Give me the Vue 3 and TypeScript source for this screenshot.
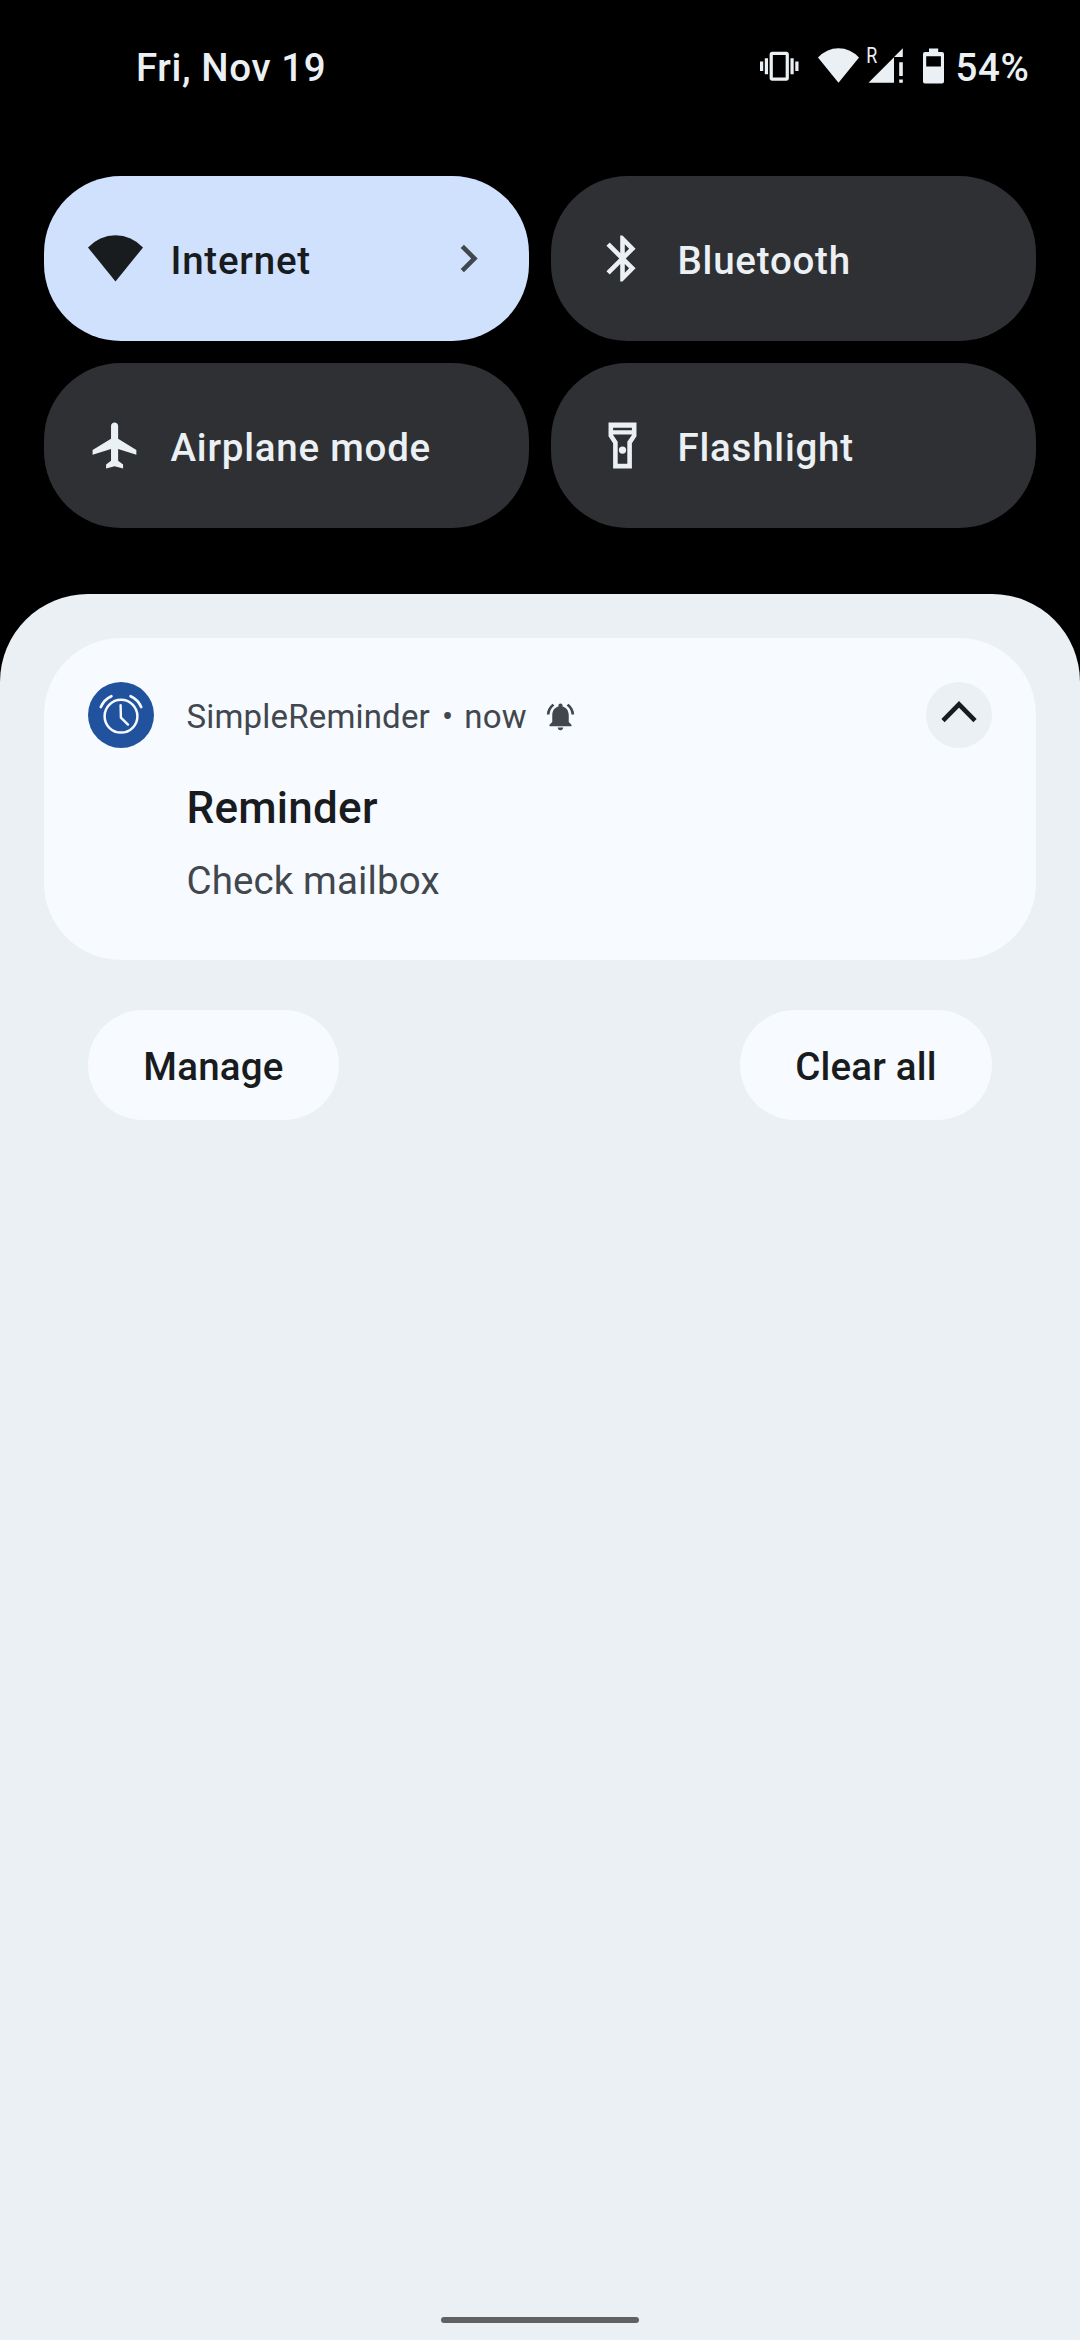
<script setup lang="ts">
interface Tile {
  label: string
  icon: string
  active?: boolean
}

const tiles: Tile[] = [
  { label: 'Internet', active: true, icon: 'M0 7.2A16.1 16.1 0 0 1 24 7.2L12 22z' },
  {
    label: 'Bluetooth',
    icon: 'M17.71 7.71L12 2h-1v7.59L6.41 5 5 6.41 10.59 12 5 17.59 6.41 19 11 14.41V22h1l5.71-5.71-4.3-4.29 4.3-4.29zM13 5.83l1.88 1.88L13 9.59V5.83zm1.88 10.46L13 18.17v-3.76l1.88 1.88z',
  },
  {
    label: 'Airplane mode',
    icon: 'M21.1 16v-2l-7.95-5V3.5c0-.83-.72-1.5-1.55-1.5s-1.55.67-1.55 1.5V9L2 14v2l8.05-2.5V18.7L7.9 20.3V22l3.7-1 3.7 1v-1.7l-2.15-1.6v-5.2l7.95 2.5z',
  },
  {
    label: 'Flashlight',
    icon: 'M18.1 2H5.9v6l2 3v11h8.2V11l2-3V2zm-2 2.3v1H7.9v-1h8.2zm-2 6.1V20H9.9v-9.6l-2-3v-.2h8.2v.2l-2 3zM12 12.4a1.6 1.6 0 1 0 0 3.2 1.6 1.6 0 1 0 0-3.2z',
  },
]
</script>

<template>
  <div class="screen">
    <header class="status">
      <span class="date">Fri, Nov 19</span>
      <div class="indicators">
        <svg class="vibrate" viewBox="0 0 24 24">
          <path d="M0 15h2V9H0v6zm3 2h2V7H3v10zm19-8v6h2V9h-2zm-3 8h2V7h-2v10zM16.5 3h-9C6.67 3 6 3.67 6 4.5v15c0 .83.67 1.5 1.5 1.5h9c.83 0 1.5-.67 1.5-1.5v-15c0-.83-.67-1.5-1.5-1.5zM16 19H8V5h8v14z" />
        </svg>
        <svg class="wifi" viewBox="0 0 41 36">
          <path d="M0 9.6A27.3 27.3 0 0 1 41 9.6L20.5 34.7z" />
        </svg>
        <svg class="signal" viewBox="-4 -6 40 48">
          <text x="-0.8" y="15.2" textLength="11" lengthAdjust="spacingAndGlyphs">R</text>
          <path d="M1.5 34.7L27 9.2V34.7zM27 8.9L35.8 0.3V8.9zM32.2 14.3h3.6V28h-3.6zM32.2 31.6h3.6v3.1h-3.6z" />
        </svg>
        <svg class="battery" viewBox="0 0 21 36">
          <path fill-rule="evenodd" d="M6 0.4h9.2V4H19a2 2 0 0 1 2 2v27.6a2 2 0 0 1-2 2H2a2 2 0 0 1-2-2V6a2 2 0 0 1 2-2h4zM3.2 8.2v10.3h14.7V8.2z" />
        </svg>
        <span class="percent">54%</span>
      </div>
    </header>

    <section class="tiles">
      <button v-for="tile in tiles" :key="tile.label" class="tile" :class="{ active: tile.active }">
        <svg class="tile-icon" viewBox="0 0 24 24"><path :d="tile.icon" /></svg>
        <span class="tile-label">{{ tile.label }}</span>
        <svg v-if="tile.active" class="chevron" viewBox="0 0 24 24">
          <path d="M8.59 16.59L13.17 12 8.59 7.41 10 6l6 6-6 6z" />
        </svg>
      </button>
    </section>

    <main class="shade">
      <article class="card">
        <svg class="app-icon" viewBox="0 0 66 66">
          <circle cx="33" cy="33" r="33" fill="#20529e" />
          <g fill="none" stroke="#f7faff" stroke-linecap="round">
            <circle cx="33" cy="34.2" r="16.4" stroke-width="2.5" />
            <path stroke-width="2.4" stroke-linejoin="round" d="M32.6 23.2L32.9 35.6L40 42.6" />
            <path stroke-width="2.7" d="M12.8 25Q16 17.6 23.4 14.2M53.2 25Q50 17.6 42.6 14.2" />
          </g>
        </svg>
        <div class="content">
          <div class="meta">
            <span>SimpleReminder</span>
            <span class="dot">•</span>
            <span>now</span>
            <svg class="bell" viewBox="0 0 24 24">
              <path d="M7.58 4.08L6.15 2.65C3.75 4.48 2.17 7.3 2.03 10.5h2c.15-2.65 1.51-4.97 3.55-6.42zm12.39 6.42h2c-.15-3.2-1.73-6.02-4.12-7.85l-1.42 1.43c2.02 1.45 3.39 3.77 3.54 6.42zM18 11c0-3.07-1.64-5.64-4.5-6.32V4c0-.83-.67-1.5-1.5-1.5s-1.5.67-1.5 1.5v.68C7.63 5.36 6 7.92 6 11v5l-2 2v1h16v-1l-2-2v-5zm-6 11c.14 0 .27-.01.4-.04.65-.14 1.18-.58 1.44-1.18.1-.24.15-.5.15-.78h-4c.01 1.1.9 2 2.01 2z" />
            </svg>
          </div>
          <h2 class="title">Reminder</h2>
          <p class="body">Check mailbox</p>
        </div>
        <svg class="collapse" viewBox="0 0 66 66">
          <circle cx="33" cy="33" r="33" fill="#ebf0f4" />
          <path d="M17 38.7L33 22.3L49 38.7" fill="none" stroke="#191c1e" stroke-width="4.6" />
        </svg>
      </article>

      <div class="actions">
        <button class="pill manage">Manage</button>
        <button class="pill clear">Clear all</button>
      </div>
      <div class="home-bar"></div>
    </main>
  </div>
</template>

<style>
body {
  background: #000;
}
</style>

<style scoped>
.screen {
  display: flex;
  flex-direction: column;
  width: 1080px;
  height: 2340px;
  overflow: hidden;
  background: #000;
  font-family: Roboto, "Noto Sans", sans-serif;
  font-weight: 500;
  font-size: 38.5px;
}

.screen svg {
  display: block;
  flex: none;
  fill: currentColor;
}

button {
  border: 0;
  margin: 0;
  font: inherit;
}

.status {
  display: flex;
  justify-content: space-between;
  align-items: center;
  height: 132px;
  margin-bottom: 44px;
  padding: 0 51px 0 136px;
  color: #ebf0f4;
  letter-spacing: 0.6px;
}

.date,
.percent {
  line-height: 46px;
  padding-top: 3px;
}

.indicators {
  display: flex;
  align-items: center;
}

.vibrate {
  width: 38.5px;
  height: 38.5px;
}

.wifi {
  width: 41px;
  height: 36px;
  margin-left: 19.5px;
}

.signal {
  width: 40px;
  height: 48px;
  margin-left: 4px;
  font-size: 22px;
  font-weight: 400;
  letter-spacing: 0;
}

.battery {
  width: 21px;
  height: 36px;
  margin-left: 20px;
}

.percent {
  width: 73.5px;
  margin-left: 11.5px;
}

.tiles {
  display: grid;
  grid-template-columns: 485px 485px;
  grid-auto-rows: 165px;
  gap: 22px;
  padding: 0 44px;
  margin-bottom: 66px;
}

.tile {
  display: flex;
  align-items: center;
  padding: 0 33px 0 44px;
  border-radius: 77px;
  background: #2f3033;
  color: #ebf0f4;
  letter-spacing: 0.77px;
  text-align: left;
}

.tile.active {
  background: #d0e1fd;
  color: #191c1e;
}

.tile-icon {
  width: 55px;
  height: 55px;
}

.tile-label {
  flex: 1;
  margin-left: 27.5px;
  padding-top: 4px;
  line-height: 46px;
}

.chevron {
  width: 55px;
  height: 55px;
  color: #42474e;
}

.shade {
  flex: 1;
  display: flex;
  flex-direction: column;
  padding: 44px 44px 17px;
  border-radius: 88px 88px 0 0;
  background: #ebf0f4;
  color: #191c1e;
}

.card {
  display: flex;
  align-items: flex-start;
  box-sizing: border-box;
  height: 322px;
  padding: 44px;
  border-radius: 77px;
  background: #f7faff;
}

.app-icon,
.collapse {
  width: 66px;
  height: 66px;
}

.content {
  flex: 1;
  margin-left: 32.5px;
}

.meta {
  display: flex;
  align-items: center;
  height: 66px;
  padding-top: 1px;
  color: #42474e;
  font-size: 33px;
  font-weight: 400;
  line-height: 39px;
  letter-spacing: 0.18px;
}

.dot {
  margin: 0 11px 0 12px;
}

.bell {
  width: 33px;
  height: 33px;
  margin-left: 17.5px;
}

.title {
  margin: 29px 0 0;
  font-size: 44px;
  font-weight: 500;
  line-height: 60px;
  letter-spacing: 0.25px;
}

.body {
  margin: 13px 0 0;
  color: #42474e;
  font-weight: 400;
  line-height: 60px;
  letter-spacing: 0.12px;
}

.actions {
  display: flex;
  justify-content: space-between;
  margin-top: 50px;
  padding: 0 44px;
}

.pill {
  height: 110px;
  padding: 3px 0 0;
  border-radius: 55px;
  background: #f7faff;
  color: #191c1e;
  line-height: 46px;
  letter-spacing: 0.2px;
}

.manage {
  width: 251px;
}

.clear {
  width: 252px;
}

.home-bar {
  align-self: center;
  width: 198px;
  height: 6px;
  margin-top: auto;
  border-radius: 3px;
  background: #606163;
}
</style>
